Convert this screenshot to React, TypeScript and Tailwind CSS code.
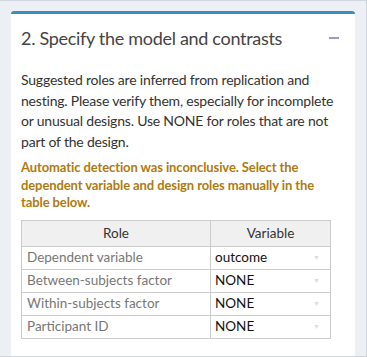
const ROWS = [
  { role: "Dependent variable", value: "outcome" },
  { role: "Between-subjects factor", value: "NONE" },
  { role: "Within-subjects factor", value: "NONE" },
  { role: "Participant ID", value: "NONE" },
];

export default function App() {
  return (
    <div className="h-[357px] w-[367px] overflow-hidden border-t border-r border-b border-[#d2d6de] bg-[#ecf0f5] pt-[10px] pl-[11px] pr-[11px] font-['Lato','Liberation_Sans',sans-serif]">
      <div className="h-[350px] border-t-[3px] border-[#3c8dbc] bg-white rounded-t-[3px]">
        {/* Header */}
        <div className="flex items-center justify-between pl-[10px] pr-[16px] pt-[7px] h-[40px]">
          <h3 className="text-[18px] leading-none text-[#444] tracking-[-0.3px]">
            2. Specify the model and contrasts
          </h3>
          <span className="block h-[2px] w-[10px] bg-[#97a0b3]" />
        </div>

        {/* Body */}
        <div className="px-[10px] pt-[16px]">
          <p className="text-[14px] leading-[20.5px] text-[#333] tracking-[-0.2px]">
            Suggested roles are inferred from replication and nesting. Please
            verify them, especially for incomplete or unusual designs. Use NONE
            for roles that are not part of the design.
          </p>
          <p className="mt-[7px] text-[13px] font-bold leading-[17.5px] text-[#b07a10] tracking-[-0.1px] pr-[10px]">
            Automatic detection was inconclusive. Select the dependent variable
            and design roles manually in the table below.
          </p>

          <table className="mt-[8px] w-[310px] border-collapse text-[13.5px]">
            <thead>
              <tr className="h-[26px] bg-[#f0f0f0]">
                <th className="w-[189px] border border-[#ccc] font-normal text-[#333]">
                  Role
                </th>
                <th className="border border-[#ccc] font-normal text-[#333]">
                  Variable
                </th>
              </tr>
            </thead>
            <tbody>
              {ROWS.map((r) => (
                <tr key={r.role} className="h-[23px]">
                  <td className="border border-[#ccc] px-[5px] text-[#777]">
                    {r.role}
                  </td>
                  <td className="border border-[#ccc] pl-[4px] pr-[10px]">
                    <div className="flex items-center justify-between">
                      <span className="text-[#111]">{r.value}</span>
                      <span className="text-[7px] text-[#ddd]">▼</span>
                    </div>
                  </td>
                </tr>
              ))}
            </tbody>
          </table>
        </div>
      </div>
    </div>
  );
}
